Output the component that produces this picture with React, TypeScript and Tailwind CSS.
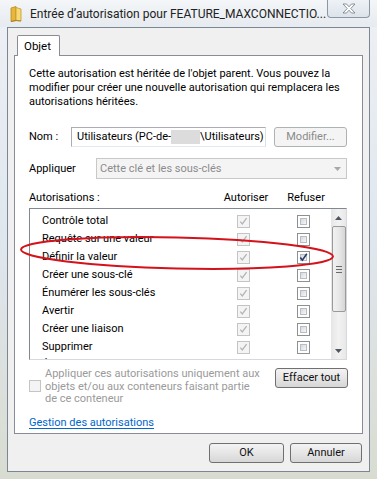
import React from "react";

function DisabledCheck() {
  return (
    <div className="relative w-[13px] h-[13px] border border-[#c4c4c4] bg-[#f4f4f4]">
      <svg width="11" height="11" viewBox="0 0 11 11" className="absolute left-0 top-0">
        <path d="M2.3 5.6 L4.3 8 L8.6 2.2" fill="none" stroke="#b4b4b4" strokeWidth="1.3" />
      </svg>
    </div>
  );
}

function Box({ checked }: { checked?: boolean }) {
  return (
    <div className="relative w-[13px] h-[13px] border border-[#8e8f8f] bg-white p-[2px]">
      <div className="w-full h-full border border-[#b9bcc2] bg-gradient-to-br from-[#d6d9de] to-[#f7f7f7]" />
      {checked && (
        <svg width="11" height="11" viewBox="0 0 11 11" className="absolute left-0 top-0">
          <path d="M2.3 5.4 L4.4 8.2 L8.8 1.8" fill="none" stroke="#2a3c6e" strokeWidth="1.6" />
        </svg>
      )}
    </div>
  );
}

function Btn({ children, className = "" }: { children: React.ReactNode; className?: string }) {
  return (
    <div
      className={
        "flex items-center justify-center rounded-[3px] border border-[#707070] bg-gradient-to-b from-[#f3f3f3] via-[#e6e6e6] to-[#d6d6d6] text-[#111] " +
        className
      }
    >
      {children}
    </div>
  );
}

const rows = [
  ["Contrôle total", false],
  ["Requête sur une valeur", false],
  ["Définir la valeur", true],
  ["Créer une sous-clé", false],
  ["Énumérer les sous-clés", false],
  ["Avertir", false],
  ["Créer une liaison", false],
  ["Supprimer", false],
  ["Écrire les autorisations DAC", false],
] as const;

export default function App() {
  return (
    <div className="relative w-[377px] h-[479px] overflow-hidden bg-gradient-to-b from-[#eef1f5] via-[#dfe6ee] to-[#d8dcd0] font-['Roboto',sans-serif] text-[11px] leading-[14px] text-black">
      {/* title bar */}
      <div className="h-[27px] flex items-center pl-[10px] bg-gradient-to-b from-[#f4f6f8] to-[#e6ebf0]">
        <svg width="12" height="16" viewBox="0 0 12 16">
          <path d="M1 2 L6 0.5 L6 14.5 L1 15.5 Z" fill="#e8b73a" stroke="#b88a1c" strokeWidth="0.8" />
          <path d="M6 1.5 L11 3 L11 15 L6 14.5 Z" fill="#f7d874" stroke="#c69a2a" strokeWidth="0.8" />
          <path d="M1 15.5 L6 14.5 L11 15" fill="none" stroke="#a07818" strokeWidth="0.8" />
        </svg>
        <span className="ml-[8px] text-[12px] text-[#222] whitespace-nowrap">
          Entrée d’autorisation pour FEATURE_MAXCONNECTIO...
        </span>
      </div>
      {/* close button */}
      <div className="absolute top-0 right-[7px] w-[43px] h-[18px] rounded-b-[4px] border border-t-0 border-[#8d97a3] bg-gradient-to-b from-[#eef2f6] to-[#dce3ea] flex items-center justify-center">
        <svg width="14" height="11" viewBox="0 0 14 11">
          <path
            d="M1 1 L4.5 1 L7 3.8 L9.5 1 L13 1 L8.8 5.5 L13 10 L9.5 10 L7 7.2 L4.5 10 L1 10 L5.2 5.5 Z"
            fill="#ffffff"
            stroke="#7d8691"
            strokeWidth="0.9"
            strokeLinejoin="round"
          />
        </svg>
      </div>

      {/* client area */}
      <div className="mx-[7px] h-[445px] border border-[#7d8794] bg-[#f0f0f0] flex flex-col pl-[6px] pr-[6px] pt-[7px]">
        {/* tab */}
        <div className="flex pl-[3px]">
          <div className="relative z-10 -mb-px w-[43px] h-[21px] rounded-t-[2px] border border-b-0 border-[#898c95] bg-white flex items-center pl-[6px] text-[11.5px]">
            Objet
          </div>
        </div>
        {/* panel */}
        <div className="h-[379px] border border-[#898c95] bg-white pl-[14px] pr-[14px] pt-[11px] flex flex-col">
          <p className="whitespace-nowrap">
            Cette autorisation est héritée de l'objet parent. Vous pouvez la
            <br />
            modifier pour créer une nouvelle autorisation qui remplacera les
            <br />
            autorisations héritées.
          </p>
          {/* Nom */}
          <div className="mt-[18px] flex items-center h-[20px]">
            <span className="w-[42px]">Nom :</span>
            <div className="w-[195px] h-[20px] border border-[#abadb3] border-b-[#e3e9ef] border-r-[#dbdfe6] flex items-center pl-[5px] whitespace-nowrap">
              Utilisateurs (PC-de-
              <span className="inline-block w-[29px] h-[14px] bg-[#dcdcdc]" />
              \Utilisateurs)
            </div>
            <div className="ml-[8px] w-[73px] h-[20px] rounded-[3px] border border-[#adb2b5] bg-[#f4f4f4] flex items-center justify-center text-[#8a8a8a]">
              Modifier...
            </div>
          </div>
          {/* Appliquer */}
          <div className="mt-[11px] flex items-center h-[21px]">
            <span className="w-[67px]">Appliquer</span>
            <div className="w-[251px] h-[21px] border border-[#c8c8c8] bg-[#f4f4f4] flex items-center justify-between pl-[3px] pr-[5px] text-[#8c8c8c]">
              <span>Cette clé et les sous-clés</span>
              <svg width="7" height="4" viewBox="0 0 7 4">
                <path d="M0 0 L7 0 L3.5 4 Z" fill="#a8a8a8" />
              </svg>
            </div>
          </div>
          {/* headers */}
          <div className="mt-[11px] flex items-center h-[15px]">
            <span className="flex-1">Autorisations :</span>
            <span className="w-[60px] text-center">Autoriser</span>
            <span className="w-[60px] text-center mr-[12px]">Refuser</span>
          </div>
          {/* list */}
          <div className="mt-[3px] h-[152px] w-[318px] border border-[#828790] border-r-[#d5d8dc] border-b-[#d5d8dc] flex overflow-hidden">
            <div className="flex-1 pt-[3px] flex flex-col overflow-hidden">
              {rows.map(([label, refuse]) => (
                <div key={label} className="h-[18px] shrink-0 flex items-center">
                  <span className="flex-1 pl-[12px] whitespace-nowrap">{label}</span>
                  <div className="w-[60px] flex justify-center">
                    <DisabledCheck />
                  </div>
                  <div className="w-[60px] flex justify-center mr-[-2px]">
                    <Box checked={refuse} />
                  </div>
                </div>
              ))}
            </div>
            {/* scrollbar */}
            <div className="w-[15px] bg-gradient-to-r from-[#e6e6e6] via-[#f2f2f2] to-[#e8e8e8] flex flex-col items-center">
              <div className="h-[17px] flex items-center justify-center">
                <svg width="7" height="4" viewBox="0 0 7 4">
                  <path d="M3.5 0 L7 4 L0 4 Z" fill="#4f5660" />
                </svg>
              </div>
              <div className="w-[14px] h-[86px] rounded-[2px] border border-[#9a9a9a] bg-gradient-to-r from-[#f1f1f1] via-[#e8e8e8] to-[#d6d6d6] flex flex-col items-center justify-center gap-[2px]">
                <div className="w-[6px] h-px bg-[#6a6a6a]" />
                <div className="w-[6px] h-px bg-[#6a6a6a]" />
                <div className="w-[6px] h-px bg-[#6a6a6a]" />
              </div>
              <div className="flex-1" />
              <div className="h-[17px] flex items-center justify-center">
                <svg width="7" height="4" viewBox="0 0 7 4">
                  <path d="M0 0 L7 0 L3.5 4 Z" fill="#4f5660" />
                </svg>
              </div>
            </div>
          </div>
          {/* apply checkbox + effacer */}
          <div className="mt-[8px] flex">
            <div className="flex-1 flex items-start">
              <div className="mt-[12px] w-[12px] h-[12px] border border-[#c4c4c4] bg-[#f4f4f4]" />
              <p className="ml-[4px] whitespace-nowrap text-[#9a9a9a] leading-[12.5px]">
                Appliquer ces autorisations uniquement aux
                <br />
                objets et/ou aux conteneurs faisant partie
                <br />
                de ce conteneur
              </p>
            </div>
            <Btn className="w-[73px] h-[20px]">Effacer tout</Btn>
          </div>
          <div className="mt-[10px] text-[#0066cc] underline underline-offset-[2px]">Gestion des autorisations</div>
        </div>
        {/* buttons */}
        <div className="mt-[9px] flex justify-end gap-[6px] pr-[1px]">
          <Btn className="w-[75px] h-[20px]">OK</Btn>
          <Btn className="w-[72px] h-[20px]">Annuler</Btn>
        </div>
      </div>

      {/* red ellipse annotation */}
      <svg className="absolute left-0 top-0 pointer-events-none" width="377" height="479" viewBox="0 0 377 479">
        <ellipse cx="177" cy="253" rx="156" ry="15.5" transform="rotate(1.3 177 253)" fill="none" stroke="#d4121c" strokeWidth="2" />
      </svg>
    </div>
  );
}
